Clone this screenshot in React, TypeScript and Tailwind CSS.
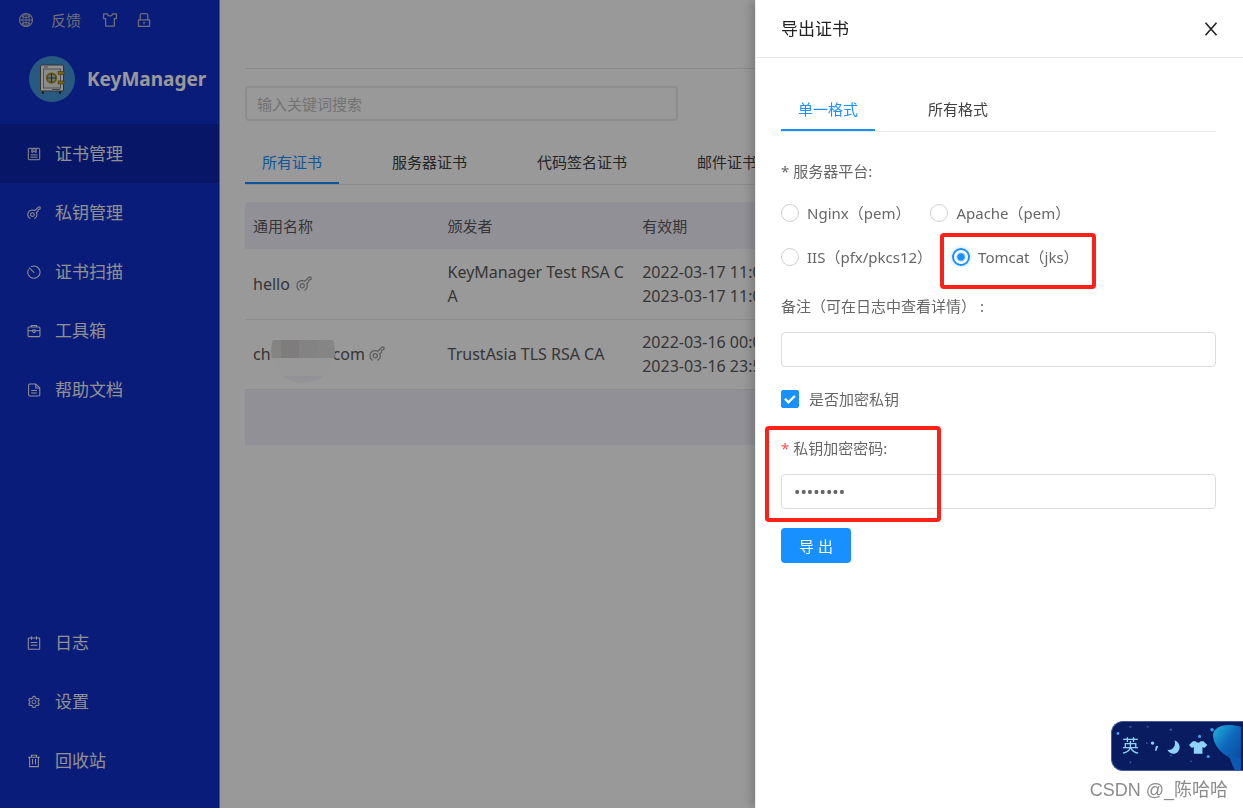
import { useState } from "react";
import { AiOutlineGlobal, AiOutlineLock, AiOutlineSetting, AiOutlineSkin } from "react-icons/ai";
import { clsx } from "clsx";

interface IconProps { className?: string; }
interface NavItem { label: string; icon: React.ElementType; }

function KeyIcon({ className }: IconProps) {
  return (
    <svg viewBox="0 0 16 16" fill="none" stroke="currentColor" strokeWidth="1.2" strokeLinecap="round" strokeLinejoin="round" className={className}>
      <path d="M3.4 14.2A5.2 5.2 0 0 1 6.2 4.600q1.600 0 2.600.6L13 1.200h2v2.200l-2.400.8-.2 2-1.700 1.500a5.200 5.200 0 0 1-1.900 6.500" />
      <circle cx="6.200" cy="9.800" r="2.100" />
    </svg>
  );
}

function CertIcon({ className }: IconProps) {
  return (
    <svg viewBox="0 0 16 16" fill="none" stroke="currentColor" strokeWidth="1.1" className={className}>
      <rect x="1.5" y="1.5" width="13" height="13" rx=".6" />
      <path d="M5.6 1.8v4.6L8 5l2.4 1.4V1.8" fill="currentColor" fillOpacity=".4" />
      <path d="M4 9h8M4 11.6h8" />
    </svg>
  );
}

function ScanIcon({ className }: IconProps) {
  return (
    <svg viewBox="0 0 16 16" fill="none" stroke="currentColor" strokeWidth="1.2" strokeLinecap="round" className={className}>
      <path d="M5 1.800A7 7 0 1 1 1.500 5.400" />
      <path d="M2.600 3.400L8 8.400" />
    </svg>
  );
}

function ToolboxIcon({ className }: IconProps) {
  return (
    <svg viewBox="0 0 16 16" fill="none" stroke="currentColor" strokeWidth="1.2" className={className}>
      <rect x="1.2" y="3.4" width="13.6" height="11" rx="1.2" />
      <path d="M5 3.400V1.700h6v1.700M1.200 7.600h5.300M9.500 7.600h5.300M6.500 7h3v1.800L8 9.800 6.500 8.800z" />
    </svg>
  );
}

function DocIcon({ className }: IconProps) {
  return (
    <svg viewBox="0 0 16 16" fill="none" stroke="currentColor" strokeWidth="1.2" className={className}>
      <path d="M3 1.200h7l4.600 4.400v7.900a1.300 1.300 0 0 1-1.300 1.300H3.100a1.300 1.300 0 0 1-1.300-1.300v-11A1.300 1.300 0 0 1 3 1.200z" />
      <path d="M10 1.200v4.400h4.600M4.800 8.600h6.400M4.800 11.400h6.400" />
    </svg>
  );
}

function LogIcon({ className }: IconProps) {
  return (
    <svg viewBox="0 0 16 16" fill="none" stroke="currentColor" strokeWidth="1.200" className={className}>
      <rect x="1.500" y="2.200" width="13" height="13" rx=".6" />
      <path d="M5.200.4v4M10.800.4v4M4.300 7.400h7.400M4.300 10.600h7.400" />
    </svg>
  );
}

function TrashIcon({ className }: IconProps) {
  return (
    <svg viewBox="0 0 16 16" fill="none" stroke="currentColor" strokeWidth="1.200" className={className}>
      <path d="M1.200 3.600h13.600M5 3.400V1.400h6v2M3 3.600v10.800h10V3.600M6.300 5.800v6M9.700 5.800v6" />
    </svg>
  );
}

function SafeLogo() {
  return (
    <svg viewBox="0 0 46 46" className="size-[46px] shrink-0">
      <circle cx="23" cy="23" r="23" fill="#4494d8" />
      <path d="M14 35v3M31 35v3" stroke="#333" strokeWidth="2" />
      <rect x="11.500" y="9" width="23" height="26" rx="1" fill="#f2f2f2" stroke="#555" />
      <rect x="14.500" y="13" width="17" height="19" fill="#e6e6e6" stroke="#888" />
      <path d="M15 11h4M23 33.500h8" stroke="#777" />
      <circle cx="22.500" cy="22" r="4.600" fill="#b8c8c0" stroke="#a58a18" strokeWidth="2" />
      <path d="M22.500 17.500v9M18 22h9" stroke="#33594f" strokeWidth="1.200" />
      <rect x="29" y="15.500" width="6" height="3" fill="#c9a818" stroke="#6b5a10" strokeWidth=".6" />
      <rect x="29" y="25" width="6" height="3" fill="#c9a818" stroke="#6b5a10" strokeWidth=".6" />
    </svg>
  );
}

const mainNav: NavItem[] = [
  { label: "证书管理", icon: CertIcon },
  { label: "私钥管理", icon: KeyIcon },
  { label: "证书扫描", icon: ScanIcon },
  { label: "工具箱", icon: ToolboxIcon },
  { label: "帮助文档", icon: DocIcon },
];

const footerNav: NavItem[] = [
  { label: "日志", icon: LogIcon },
  { label: "设置", icon: AiOutlineSetting },
  { label: "回收站", icon: TrashIcon },
];

const certTabs = ["所有证书", "服务器证书", "代码签名证书", "邮件证书"];
const formatTabs = ["单一格式", "所有格式"];

function NavLinks({ items, active }: { items: NavItem[]; active?: string }) {
  return (
    <nav>
      {items.map((item) => (
        <a
          key={item.label}
          href="#"
          className={clsx(
            "flex h-[59px] items-center gap-3.5 pl-[27px] text-[17px] text-[#f0f0f0]",
            item.label === active && "bg-[#0d26ab]"
          )}
        >
          <item.icon className="size-3.5 shrink-0" />
          <span>{item.label}</span>
        </a>
      ))}
    </nav>
  );
}

function Sidebar() {
  return (
    <aside className="flex w-[220px] shrink-0 flex-col border-r border-[#8890c8] bg-[#112fca] pb-[18px]">
      <div className="flex h-10 items-center pl-[18px] text-[#b9b9c4]">
        <button aria-label="语言"><AiOutlineGlobal className="size-4" /></button>
        <a href="#" className="ml-[17px] text-[15px]">反馈</a>
        <button aria-label="皮肤" className="ml-5"><AiOutlineSkin className="size-[18px]" /></button>
        <button aria-label="锁定" className="ml-4"><AiOutlineLock className="size-[18px]" /></button>
      </div>
      <div className="flex h-[84px] items-center gap-3 pb-1.5 pl-[29px]">
        <SafeLogo />
        <span className="text-[19px] font-bold text-white">KeyManager</span>
      </div>
      <NavLinks items={mainNav} active="证书管理" />
      <div className="mt-auto">
        <NavLinks items={footerNav} />
      </div>
    </aside>
  );
}

function Tabs({ items }: { items: string[] }) {
  const [active, setActive] = useState(items[0]);
  return (
    <div role="tablist" className="flex gap-9 overflow-hidden border-b border-[#e8e8e8]">
      {items.map((tab) => (
        <button
          key={tab}
          role="tab"
          aria-selected={tab === active}
          onClick={() => setActive(tab)}
          className={clsx(
            "shrink-0 border-b-2 px-[17px] py-2 text-[15px] leading-6",
            tab === active ? "border-[#1890ff] text-[#1890ff]" : "border-transparent text-[#404040]"
          )}
        >
          {tab}
        </button>
      ))}
    </div>
  );
}

// Pixelated patch that hides part of the domain
function Mosaic() {
  return (
    <svg viewBox="0 0 64 44" className="absolute -top-0.5 left-0 h-11 w-16">
      <clipPath id="patch"><circle cx="32" cy="11" r="32" /></clipPath>
      <g clipPath="url(#patch)">
        <rect width="64" height="44" fill="#fdfdfe" />
        <rect width="10" height="18" fill="#dcdcda" />
        <rect x="10" width="18" height="18" fill="#d3cfd0" />
        <rect x="28" width="18" height="18" fill="#dadada" />
        <rect x="46" width="18" height="18" fill="#dededf" />
        <rect y="36" width="64" height="8" fill="#f6f6fc" />
      </g>
    </svg>
  );
}

function CertTable() {
  return (
    <table className="w-full table-fixed text-left leading-6 text-[#5a5a5a]">
      <thead className="bg-[#f2f1fc] text-[15px]">
        <tr className="h-[47px]">
          <th className="w-1/5 px-2 font-normal">通用名称</th>
          <th className="w-1/5 px-2 font-normal">颁发者</th>
          <th className="w-1/5 px-2 font-normal">有效期</th>
          <td className="w-2/5" />
        </tr>
      </thead>
      <tbody className="text-base leading-6">
        <tr className="h-[70px] border-b border-[#ebebef]">
          <td className="px-2">
            <span className="flex items-center gap-1.5">hello <KeyIcon className="size-4 text-[#999]" /></span>
          </td>
          <td className="px-2 break-all">KeyManager Test RSA CA</td>
          <td className="px-2 whitespace-nowrap">2022-03-17 11:06:12<br />2023-03-17 11:06:12</td>
          <td />
        </tr>
        <tr className="h-[70px] border-b border-[#ebebef]">
          <td className="px-2">
            <span className="flex items-center">
              ch
              <span className="relative h-6 w-[62px]"><Mosaic /></span>
              <span className="mr-1">com</span>
              <KeyIcon className="size-4 text-[#999]" />
            </span>
          </td>
          <td className="px-2 break-all">TrustAsia TLS RSA CA</td>
          <td className="px-2 whitespace-nowrap">2022-03-16 00:00:00<br />2023-03-16 23:59:59</td>
          <td />
        </tr>
      </tbody>
      <tfoot className="bg-[#f2f1fc]">
        <tr className="h-14"><td colSpan={4} /></tr>
      </tfoot>
    </table>
  );
}

function PlatformRadio({ label, value, onChange }: { label: string; value: string; onChange: (v: string) => void }) {
  return (
    <label className="flex items-center gap-2">
      <input
        type="radio"
        name="platform"
        checked={value === label}
        onChange={() => onChange(label)}
        className="size-[18px] appearance-none rounded-full border border-[#d0d0d0] checked:border-2 checked:border-[#1890ff] checked:bg-[radial-gradient(circle,#1890ff_3px,white_5px)] checked:shadow-[0_0_4px_#1890ff55]"
      />
      {label}
    </label>
  );
}

function ExportDrawer() {
  const [platform, setPlatform] = useState("Tomcat（jks）");
  const [encrypt, setEncrypt] = useState(true);
  const [note, setNote] = useState("");
  const [password, setPassword] = useState("12345678");

  return (
    <section className="fixed inset-y-0 right-0 w-[488px] border-l border-[#ebebeb] bg-white text-[15px] leading-6 text-[#666] shadow-[-4px_0_10px_rgba(0,0,0,0.2)]">
      <header className="flex h-[58px] items-center justify-between border-b border-[#e8e8e8] px-[25px] text-[#222]">
        <h2 className="text-[17px]">导出证书</h2>
        <button aria-label="关闭">
          <svg viewBox="0 0 14 14" className="size-3.5" fill="none" stroke="currentColor" strokeWidth="1.6">
            <path d="M1.500.7l11 12.600M12.500.7l-11 12.600" />
          </svg>
        </button>
      </header>

      <form className="pt-[31px] pr-[27px] pl-[25px]" onSubmit={(e) => e.preventDefault()}>
        <Tabs items={formatTabs} />

        <fieldset className="mt-[27px]">
          <legend>* 服务器平台:</legend>
          <div className="mt-[18px] flex gap-5">
            <PlatformRadio label="Nginx（pem）" value={platform} onChange={setPlatform} />
            <PlatformRadio label="Apache（pem）" value={platform} onChange={setPlatform} />
          </div>
          <div className="mt-5 flex gap-5">
            <PlatformRadio label="IIS（pfx/pkcs12）" value={platform} onChange={setPlatform} />
            <div className="relative">
              <PlatformRadio label="Tomcat（jks）" value={platform} onChange={setPlatform} />
              <div className="pointer-events-none absolute -top-3 -left-3 h-14 w-[156px] rounded border-4 border-[#fb2018]" />
            </div>
          </div>
        </fieldset>

        <label htmlFor="note" className="mt-[25px] block">备注（可在日志中查看详情） :</label>
        <input
          id="note"
          value={note}
          onChange={(e) => setNote(e.target.value)}
          className="mt-3.5 block h-[35px] w-full rounded border border-[#dcdcdc] px-3"
        />

        <label className="mt-5 flex items-center gap-2.5">
          <span className="grid size-[18px]">
            <input
              type="checkbox"
              checked={encrypt}
              onChange={(e) => setEncrypt(e.target.checked)}
              className="col-start-1 row-start-1 size-[18px] appearance-none rounded-xs border border-[#d9d9d9] checked:border-[#1890ff] checked:bg-[#1890ff]"
            />
            <svg viewBox="0 0 18 18" className="pointer-events-none col-start-1 row-start-1" fill="none" stroke="white" strokeWidth="2.400">
              <path d="M4 8.800l3.400 3.600L13.800 6" />
            </svg>
          </span>
          是否加密私钥
        </label>

        <div className="relative mt-[25px]">
          <label htmlFor="password" className="block"><span className="text-[#ff4d4f]">*</span> 私钥加密密码:</label>
          <input
            id="password"
            type="password"
            value={password}
            onChange={(e) => setPassword(e.target.value)}
            className="mt-3.5 block h-[35px] w-full rounded border border-[#dcdcdc] px-3 text-[17px]"
          />
          <div className="pointer-events-none absolute -top-2.5 -left-4 h-24 w-44 rounded border-4 border-[#fb2018]" />
        </div>

        <button type="submit" className="mt-[19px] h-[35px] w-[70px] rounded bg-[#1890ff] text-white">导 出</button>
      </form>
    </section>
  );
}

function ImeBar() {
  return (
    <div className="relative ml-auto flex h-[50px] w-[132px] items-center gap-2 overflow-hidden rounded-l-xl border border-r-0 border-[#4a5a9a] bg-[#0a1c60] pl-2.5 text-[17px] text-[#8fd4f8]">
      <svg viewBox="0 0 132 50" className="absolute inset-0 h-full w-full">
        <defs>
          <linearGradient id="whale" x1="0" y1="0" x2="1" y2="1">
            <stop offset="0" stopColor="#22b4e0" />
            <stop offset=".5" stopColor="#0d68bc" />
            <stop offset="1" stopColor="#0a4a9c" />
          </linearGradient>
        </defs>
        <path d="M103 14c0-9 12-14 29-9v36c-15-3-28-13-29-27z" fill="url(#whale)" />
        <path d="M118 34c4 5 4 10 8 16h6V38z" fill="#0a5ab4" />
        <g fill="#3f9ff0">
          <circle cx="4" cy="12" r="1.500" />
          <circle cx="89" cy="15" r="1.600" />
          <circle cx="98" cy="36" r="1.600" />
          <circle cx="102" cy="8" r="1.800" />
        </g>
        <g fill="#3a55a8">
          <circle cx="17" cy="5" r="1.200" />
          <circle cx="59" cy="8" r="1.300" />
          <circle cx="35" cy="5" r="1" />
          <circle cx="17" cy="42" r="1" />
          <circle cx="59" cy="35" r="1" />
          <circle cx="34" cy="22" r="1" />
          <circle cx="80" cy="41" r="1" />
        </g>
        <g fill="#8fd4f8">
          <circle cx="40" cy="22" r="1.800" />
          <path d="M43.500 25h2.500l-2 5h-1.500z" />
          <path d="M63 19c7 3 7 12 0 14-3 .6-6-1-7.500-4 6 .5 9-4 7.500-10z" />
          <path d="M82 20h3c1 2 4 2 5 0h3l4 4-3 3-2-1v7H83v-7l-2 1-3-3z" />
        </g>
      </svg>
      <span className="relative">英</span>
    </div>
  );
}

export default function App() {
  return (
    <div className="flex min-h-screen overflow-hidden bg-white font-['Noto_Sans','Noto_Sans_CJK_SC',sans-serif]">
      <Sidebar />
      <main className="min-w-0 flex-1 px-[25px]">
        <div className="h-[69px] border-b border-[#e8e8e8]" />
        <input
          type="search"
          aria-label="搜索"
          placeholder="输入关键词搜索"
          className="mt-[17px] mb-[21px] block h-[35px] w-[433px] rounded border-2 border-[#ebebeb] px-2.5 text-[15px] placeholder:text-[#bfbfbf]"
        />
        <Tabs items={certTabs} />
        <div className="mt-[17px] overflow-hidden rounded-t">
          <CertTable />
        </div>
      </main>

      <div className="fixed inset-0 bg-black/40" />
      <ExportDrawer />

      <div className="fixed right-0 bottom-1">
        <ImeBar />
        <p className="mt-[5px] pr-[15px] text-right font-['Liberation_Sans','Noto_Sans_CJK_SC',sans-serif] text-lg leading-7 text-[#8c8c8c]">CSDN @_陈哈哈</p>
      </div>
    </div>
  );
}
